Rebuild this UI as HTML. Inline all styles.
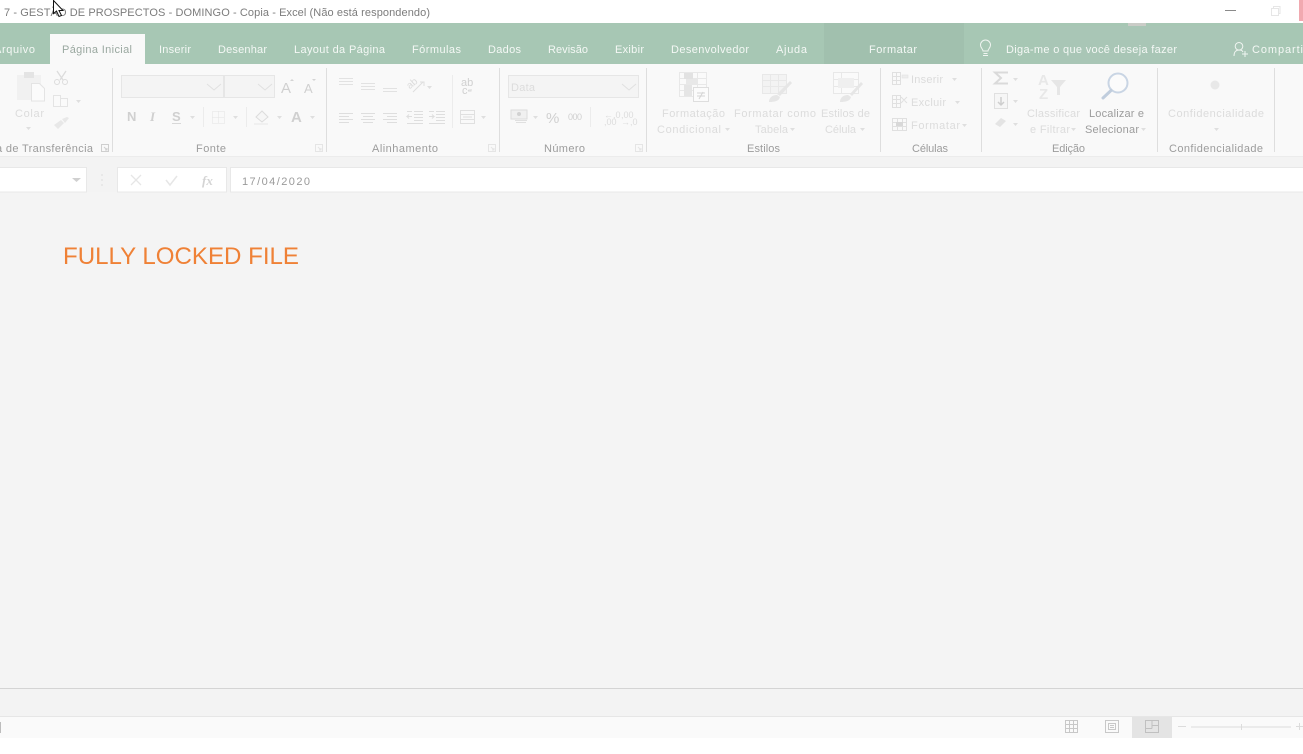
<!DOCTYPE html>
<html lang="pt"><head><meta charset="utf-8"><title>Excel</title>
<style>
html,body{margin:0;padding:0;background:#fff;width:1303px;height:754px;overflow:hidden}
svg{display:block}
text{font-family:"Liberation Sans",sans-serif;font-size:11px}
.t{fill:#7c7c7c;font-size:11px}
.tab{fill:#f4f8f5;font-size:11px}
.g{fill:#9c9c9c}
.d{fill:#dcdcdc}
.m{fill:#d0d0d0}
.l2{stroke:#dedede;stroke-width:1;fill:none}
.sep{stroke:#dedede;stroke-width:1}
.ar{fill:#dfdfdf}
</style></head>
<body>
<svg width="1303" height="754" viewBox="0 0 1303 754" xmlns="http://www.w3.org/2000/svg">
<!-- backgrounds -->
<rect width="1303" height="23" fill="#fff"/>
<rect y="23" width="1303" height="41" fill="#a7c7b4"/>
<rect x="824" y="23" width="140" height="41" fill="#a1c0ae"/>
<rect x="1040" y="26" width="220" height="38" fill="#a9c6b6"/>
<rect x="1128" y="23" width="18" height="3" fill="#d9cfcf" opacity=".7"/>
<rect y="64" width="1303" height="92" fill="#f9f9f9"/>
<rect y="156" width="1303" height="11" fill="#f3f3f3"/>
<rect y="156" width="1303" height="1" fill="#ececec"/>
<rect y="167" width="1303" height="25" fill="#f3f3f3"/>
<rect y="192" width="1303" height="496" fill="#f4f4f4"/>
<rect y="688" width="1303" height="1" fill="#d4d4d4"/>
<rect y="689" width="1303" height="27" fill="#f3f3f3"/>
<rect y="716" width="1303" height="1" fill="#e6e6e6"/>
<rect y="717" width="1303" height="21" fill="#fafafa"/>
<rect y="738" width="1303" height="16" fill="#fff"/>

<!-- title bar -->
<text x="4" y="16" class="t" textLength="426" lengthAdjust="spacing">7 - GESTÃO DE PROSPECTOS - DOMINGO - Copia - Excel (Não está respondendo)</text>
<rect x="1225" y="10" width="11" height="1" fill="#8a8a8a"/>
<path d="M1271.500 8.500h7v7h-7zM1273.500 8.500v-2h6.500v7h-2" fill="none" stroke="#e6e6e6"/>
<rect x="1299" y="0" width="4" height="21" fill="#f1a9b0"/>

<!-- cursor -->
<path d="M53.500 0.500V13.500L56.500 11L59 16.500L61.500 15.500L59 10.500H63Z" fill="#fff" stroke="#111" stroke-width="1"/>

<!-- tabs -->
<rect x="50" y="34" width="95" height="30" fill="#f9f9f9"/>
<text x="-6" y="53" class="tab" textLength="41">Arquivo</text>
<text x="62" y="53" fill="#9aa8a0" textLength="70">Página Inicial</text>
<text x="159" y="53" class="tab" textLength="32">Inserir</text>
<text x="218" y="53" class="tab" textLength="49">Desenhar</text>
<text x="294" y="53" class="tab" textLength="91">Layout da Página</text>
<text x="412" y="53" class="tab" textLength="49">Fórmulas</text>
<text x="488" y="53" class="tab" textLength="33">Dados</text>
<text x="548" y="53" class="tab" textLength="40">Revisão</text>
<text x="615" y="53" class="tab" textLength="29">Exibir</text>
<text x="671" y="53" class="tab" textLength="78">Desenvolvedor</text>
<text x="776" y="53" class="tab" textLength="31">Ajuda</text>
<text x="869" y="53" class="tab" textLength="48">Formatar</text>
<text x="1006" y="53" class="tab" textLength="171">Diga-me o que você deseja fazer</text>
<text x="1252" y="53" class="tab" textLength="51">Comparti</text>
<!-- bulb -->
<path d="M983 55.500h5M983.500 53.500h4M983 51c0-2-2.500-3-2.500-6a5 5 0 0 1 10 0c0 3-2.500 4-2.500 6z" fill="none" stroke="#f0f5f1" stroke-width="1"/>
<!-- share -->
<path d="M1234 56c0-4 2-6 5-6s3.500 1 4 2M1239 42.500a3.800 3.800 0 1 1 0 7.600a3.800 3.800 0 0 1 0-7.600zM1245 51v6M1242 54h6" fill="none" stroke="#f0f5f1" stroke-width="1"/>

<!-- group separators -->
<g class="sep">
<line x1="112.500" y1="68" x2="112.500" y2="152"/>
<line x1="326.500" y1="68" x2="326.500" y2="152"/>
<line x1="499.500" y1="68" x2="499.500" y2="152"/>
<line x1="646.500" y1="68" x2="646.500" y2="152"/>
<line x1="880.500" y1="68" x2="880.500" y2="152"/>
<line x1="981.500" y1="68" x2="981.500" y2="152"/>
<line x1="1157.500" y1="68" x2="1157.500" y2="152"/>
<line x1="1274.500" y1="68" x2="1274.500" y2="152"/>
<line x1="452.500" y1="75" x2="452.500" y2="128" stroke="#ececec"/>
<line x1="203.500" y1="107" x2="203.500" y2="127" stroke="#ececec"/>
<line x1="246.500" y1="107" x2="246.500" y2="127" stroke="#ececec"/>
<line x1="590.500" y1="107" x2="590.500" y2="127" stroke="#ececec"/>
</g>

<!-- group labels -->
<text x="-4" y="152" class="g" textLength="97">a de Transferência</text>
<text x="196" y="152" class="g" textLength="30">Fonte</text>
<text x="372" y="152" class="g" textLength="66">Alinhamento</text>
<text x="544" y="152" class="g" textLength="41">Número</text>
<text x="747" y="152" class="g" textLength="33">Estilos</text>
<text x="912" y="152" class="g" textLength="36">Células</text>
<text x="1052" y="152" class="g" textLength="33">Edição</text>
<text x="1169" y="152" class="g" textLength="94">Confidencialidade</text>
<!-- launchers -->
<g fill="none" stroke="#cfcfcf">
<path d="M101.500 144.500h7v7h-7zM104 147l3 3M107 148v2h-2"/>
<path d="M315.500 144.500h7v7h-7zM318 147l3 3M321 148v2h-2" stroke="#e5e5e5"/>
<path d="M488.500 144.500h7v7h-7zM491 147l3 3M494 148v2h-2" stroke="#e5e5e5"/>
<path d="M635.500 144.500h7v7h-7zM638 147l3 3M641 148v2h-2" stroke="#e5e5e5"/>
</g>

<!-- clipboard -->
<rect x="17" y="75" width="24" height="25" fill="#f1f1f1"/>
<rect x="24" y="72" width="10" height="6" fill="#e4e4e4"/>
<path d="M31.500 83.500h8l5 5v12.500h-13z" fill="#fbfbfb" stroke="#e4e4e4"/>
<text x="15" y="117" class="d" textLength="29">Colar</text>
<path d="M26 127h5l-2.500 3z" class="ar"/>
<path d="M57 71l6 9M66 71l-6 9" stroke="#dcdcdc" fill="none" stroke-width="1.300"/>
<circle cx="57" cy="82" r="2.500" fill="none" stroke="#dcdcdc"/><circle cx="65" cy="82" r="2.500" fill="none" stroke="#dcdcdc"/>
<path d="M53.500 95.500h7v11h-7zM60.500 98.500h7v8h-7z" fill="#fafafa" stroke="#e4e4e4"/>
<path d="M76 100h5l-2.500 3z" class="ar"/>
<path d="M54 125l7-5 3 3-6 6zM62 119l5-2 2 1-4 5z" fill="#e8e8e8"/>

<!-- font controls -->
<rect x="121.500" y="75.500" width="102" height="22" fill="#f4f4f4" stroke="#e6e6e6"/>
<rect x="224.500" y="75.500" width="50" height="22" fill="#f4f4f4" stroke="#e6e6e6"/>
<path d="M207 84l7 6 7-6M258 84l7 6 7-6" fill="none" stroke="#e0e0e0"/>
<text x="281" y="93" class="m" style="font-size:15px">A</text>
<text x="304" y="93" class="m" style="font-size:13px">A</text>
<path d="M290 81l2-2 2 2zM312 79l2 2 2-2z" fill="#d4d4d4"/>
<text x="127" y="121" class="m" style="font-size:13px;font-weight:bold">N</text>
<text x="150" y="121" class="m" style="font-size:13px;font-style:italic;font-family:'Liberation Serif',serif;font-weight:bold">I</text>
<text x="172" y="121" class="m" style="font-size:13px;font-weight:bold">S</text>
<rect x="172" y="123" width="9" height="1" fill="#d8d8d8"/>
<path d="M190 116h5l-2.500 3zM233 116h5l-2.500 3zM277 116h5l-2.500 3zM310 116h5l-2.500 3z" class="ar"/>
<path d="M212.500 111.500h12v12h-12zM212.500 117.500h12M218.500 111.500v12" fill="none" stroke="#e4e4e4" stroke-dasharray="1 1"/>
<path d="M256 117l6-6 6 6-6 5z" fill="#f6f6f6" stroke="#dcdcdc"/>
<rect x="254" y="123" width="14" height="2" fill="#f0f0f0"/>
<text x="291" y="122" class="m" style="font-size:15px;font-weight:bold">A</text>

<!-- alignment -->
<g class="l2">
<path d="M339 78.500h14M339 81.500h14M339 84.500h14" stroke="#e2e2e2"/>
<path d="M361 83.500h14M361 86.500h14M361 89.500h14" stroke="#e2e2e2"/>
<path d="M383 88.500h14M383 91.500h14" stroke="#e2e2e2"/>
<path d="M339 113.500h14M339 116.500h10M339 119.500h14M339 122.500h10"/>
<path d="M361 113.500h14M363 116.500h10M361 119.500h14M363 122.500h10"/>
<path d="M383 113.500h14M387 116.500h10M383 119.500h14M387 122.500h10"/>
<path d="M414 111.500h9M414 114.500h9M414 117.500h9M414 120.500h9M407 123.500h16M407 111.500h5M412 116.500h-5l2-2m-2 2l2 2"/>
<path d="M436 111.500h9M436 114.500h9M436 117.500h9M436 120.500h9M429 123.500h16M429 111.500h5M429 116.500h5l-2-2m2 2l-2 2"/>
<path d="M413 92l10-10M420 82h4v4"/>
</g>
<text x="407" y="86" transform="rotate(-40 413 84)" class="d" style="font-size:10px">ab</text>
<path d="M427 86h5l-2.500 3z" class="ar"/>
<text x="461" y="86" class="m" style="font-size:11px">ab</text>
<text x="462" y="94" class="m" style="font-size:11px">c</text>
<path d="M468 91h3v-2M468 91l1.500-1.500" stroke="#d8d8d8" fill="none"/>
<path d="M460.500 110.500h14v13h-14zM460.500 114.500h14M460.500 119.500h14M463 117h9" fill="none" stroke="#e0e0e0"/>
<path d="M481 116h5l-2.500 3z" class="ar"/>

<!-- number -->
<rect x="508.500" y="75.500" width="130" height="22" fill="#f4f4f4" stroke="#e6e6e6"/>
<text x="511" y="91" class="d" textLength="24">Data</text>
<path d="M622 84l7 6 7-6" fill="none" stroke="#e0e0e0"/>
<rect x="511" y="110" width="16" height="9" fill="#f0f0f0" stroke="#dcdcdc"/>
<circle cx="519" cy="114" r="2" fill="#d2d2d2"/>
<path d="M515 120.500h12M516 122.500h10" stroke="#e0e0e0"/>
<path d="M533 116h5l-2.500 3z" class="ar"/>
<text x="546" y="123" class="m" style="font-size:15px">%</text>
<text x="568" y="120" style="font-size:9px" fill="#d0d0d0" textLength="14">000</text>
<text x="604" y="118" class="d" style="font-size:9px">←,0</text>
<text x="604" y="125" class="d" style="font-size:9px">,00</text>
<text x="621" y="118" class="d" style="font-size:9px">,00</text>
<text x="621" y="125" class="d" style="font-size:9px">→,0</text>

<!-- styles -->
<path d="M679.500 72.500h27v24h-27zM679.500 78.500h27M679.500 84.500h27M679.500 90.500h27M688.500 72.500v24M697.500 72.500v24" fill="#fafafa" stroke="#e8e8e8"/>
<rect x="684" y="73" width="9" height="6" fill="#e2e2e2"/><rect x="686" y="79" width="12" height="6" fill="#e8e8e8"/><rect x="684" y="85" width="8" height="11" fill="#e5e5e5"/>
<rect x="693.500" y="87.500" width="15" height="14" fill="#fbfbfb" stroke="#dedede"/>
<path d="M697 93h8M697 96h8M699 99l4-7" stroke="#d4d4d4" fill="none"/>
<text x="662" y="117" class="d" textLength="63">Formatação</text>
<text x="657" y="133" class="d" textLength="64">Condicional</text>
<path d="M725 128h5l-2.500 3z" class="ar"/>
<path d="M762.500 74.500h24v19h-24zM762.500 80.500h24M762.500 86.500h24M770.500 74.500v19M778.500 74.500v19" fill="#f3f3f3" stroke="#e8e8e8"/>
<path d="M777 94l13-13 2 2-12 13zM769 102c0-4 3-7 8-7l3 2c-1 4-5 5-11 5z" fill="#e6e6e6"/>
<text x="734" y="117" class="d" textLength="82">Formatar como</text>
<text x="755" y="133" class="d" textLength="33">Tabela</text>
<path d="M790 128h5l-2.500 3z" class="ar"/>
<path d="M833.500 72.500h25v21h-25zM833.500 79.500h25M833.500 86.500h25M841.500 72.500v21" fill="#fafafa" stroke="#e8e8e8"/>
<rect x="838" y="78" width="16" height="10" fill="#efefef"/>
<path d="M850 94l11-12 2 2-11 12zM840 102c0-4 3-7 8-7l3 2c-1 4-5 5-11 5z" fill="#e6e6e6"/>
<text x="821" y="117" class="d" textLength="49">Estilos de</text>
<text x="825" y="133" class="d" textLength="31">Célula</text>
<path d="M860 128h5l-2.500 3z" class="ar"/>

<!-- cells -->
<path d="M892.500 72.500h8v4h-8zM892.500 76.500h8v4h-8zM892.500 80.500h8v4h-8zM896.500 72.500v12" fill="none" stroke="#e0e0e0"/>
<rect x="902" y="75" width="6" height="3" fill="#eeeeee" stroke="#e0e0e0" stroke-width=".5"/>
<text x="911" y="83" class="d" textLength="32">Inserir</text>
<path d="M952 78h5l-2.500 3z" class="ar"/>
<path d="M892.500 95.500h8v4h-8zM892.500 99.500h8v4h-8zM892.500 103.500h8v4h-8zM896.500 95.500v12M901 97l6 6M907 97l-6 6" fill="none" stroke="#e0e0e0"/>
<text x="911" y="106" class="d" textLength="35">Excluir</text>
<path d="M955 101h5l-2.500 3z" class="ar"/>
<path d="M892.500 118.500h14v12h-14zM892.500 122.500h14M892.500 126.500h14M897.500 118.500v12M902.500 118.500v12" fill="none" stroke="#e0e0e0"/>
<rect x="896" y="122" width="7" height="4" fill="#d8d8d8"/>
<text x="911" y="129" class="d" textLength="49">Formatar</text>
<path d="M962 124h5l-2.500 3z" class="ar"/>

<!-- editing -->
<path d="M1008 72.500h-13l6 5.500-6 5.500h13" fill="none" stroke="#dadada" stroke-width="2"/>
<path d="M1013 78h5l-2.500 3zM1013 100h5l-2.500 3zM1013 123h5l-2.500 3zM1071 128h5l-2.500 3zM1141 128h5l-2.500 3z" class="ar"/>
<rect x="994.500" y="93.500" width="13" height="15" fill="#f6f6f6" stroke="#e0e0e0"/>
<path d="M1001 97v8M998 102l3 3 3-3" fill="none" stroke="#cecece" stroke-width="1.500"/>
<path d="M995 124l6-6 5 3-6 6z" fill="#e4e4e4"/>
<text x="1038" y="85" style="font-size:15px;font-weight:bold" fill="#e8e8e8">A</text>
<text x="1039" y="99" style="font-size:15px;font-weight:bold" fill="#e8e8e8">Z</text>
<path d="M1051 80h15l-6 7v8h-3v-8z" fill="#e6e6e6"/>
<text x="1027" y="117" class="d" textLength="53">Classificar</text>
<text x="1030" y="133" class="d" textLength="40">e Filtrar</text>
<circle cx="1118" cy="83" r="9.500" fill="#fbfbfb" stroke="#c9d5e4" stroke-width="2"/>
<path d="M1111 90.500l-8 7.500" stroke="#c0cddd" stroke-width="3" stroke-linecap="round"/>
<text x="1089" y="117" class="g" textLength="55">Localizar e</text>
<text x="1085" y="133" class="g" textLength="54">Selecionar</text>

<!-- confidentiality -->
<circle cx="1215" cy="85" r="4.500" fill="#e8e8e8"/>
<text x="1168" y="117" class="d" textLength="96">Confidencialidade</text>
<path d="M1214 128h5l-2.500 3z" class="ar"/>

<!-- formula bar -->
<rect x="-2" y="167.500" width="88.500" height="24.500" fill="#fff" stroke="#e8e8e8"/>
<path d="M72 178h9l-4.500 4z" fill="#d0d0d0"/>
<path d="M102 174.500v1M102 179.500v1M102 184.500v1" stroke="#dcdcdc" stroke-width="2"/>
<rect x="117.500" y="167.500" width="109" height="24.500" fill="#fff" stroke="#e8e8e8"/>
<path d="M131 175l10 10M141 175l-10 10" stroke="#e6e6e6" stroke-width="1.300"/>
<path d="M166 180l4 5 7-9" stroke="#e6e6e6" stroke-width="1.500" fill="none"/>
<text x="202" y="185" style="font-family:'Liberation Serif',serif;font-size:13px;font-style:italic;font-weight:bold" fill="#d4d4d4">fx</text>
<rect x="230.500" y="167.500" width="1080" height="24.500" fill="#fff" stroke="#e8e8e8"/>
<text x="242" y="185" fill="#9a9a9a" textLength="68">17/04/2020</text>

<!-- main message -->
<text x="63" y="264" style="font-size:24px" fill="#ef8136" textLength="236" lengthAdjust="spacingAndGlyphs">FULLY LOCKED FILE</text>

<!-- status bar -->
<rect x="0" y="722" width="1" height="11" fill="#bdbdbd"/>
<rect x="1132" y="717" width="40" height="21" fill="#e4e4e4"/>
<path d="M1065.500 720.500h12v12h-12zM1065.500 724.500h12M1065.500 728.500h12M1069.500 720.500v12M1073.500 720.500v12" fill="none" stroke="#c8c8c8"/>
<path d="M1105.500 720.500h13v12h-13zM1108.500 723.500h7v6h-7zM1110 725.500h4M1110 727.500h4" fill="none" stroke="#c8c8c8"/>
<path d="M1145.500 720.500h13v12h-13zM1145.500 728.500h6.500M1152 720.500v8M1152 725.500h6.500" fill="none" stroke="#c0c0c0"/>
<path d="M1178 726.500h8M1191 727h100M1241.500 724v6M1296 726.500h7M1299.500 723v7" stroke="#dcdcdc" fill="none"/>
</svg>
</body></html>
